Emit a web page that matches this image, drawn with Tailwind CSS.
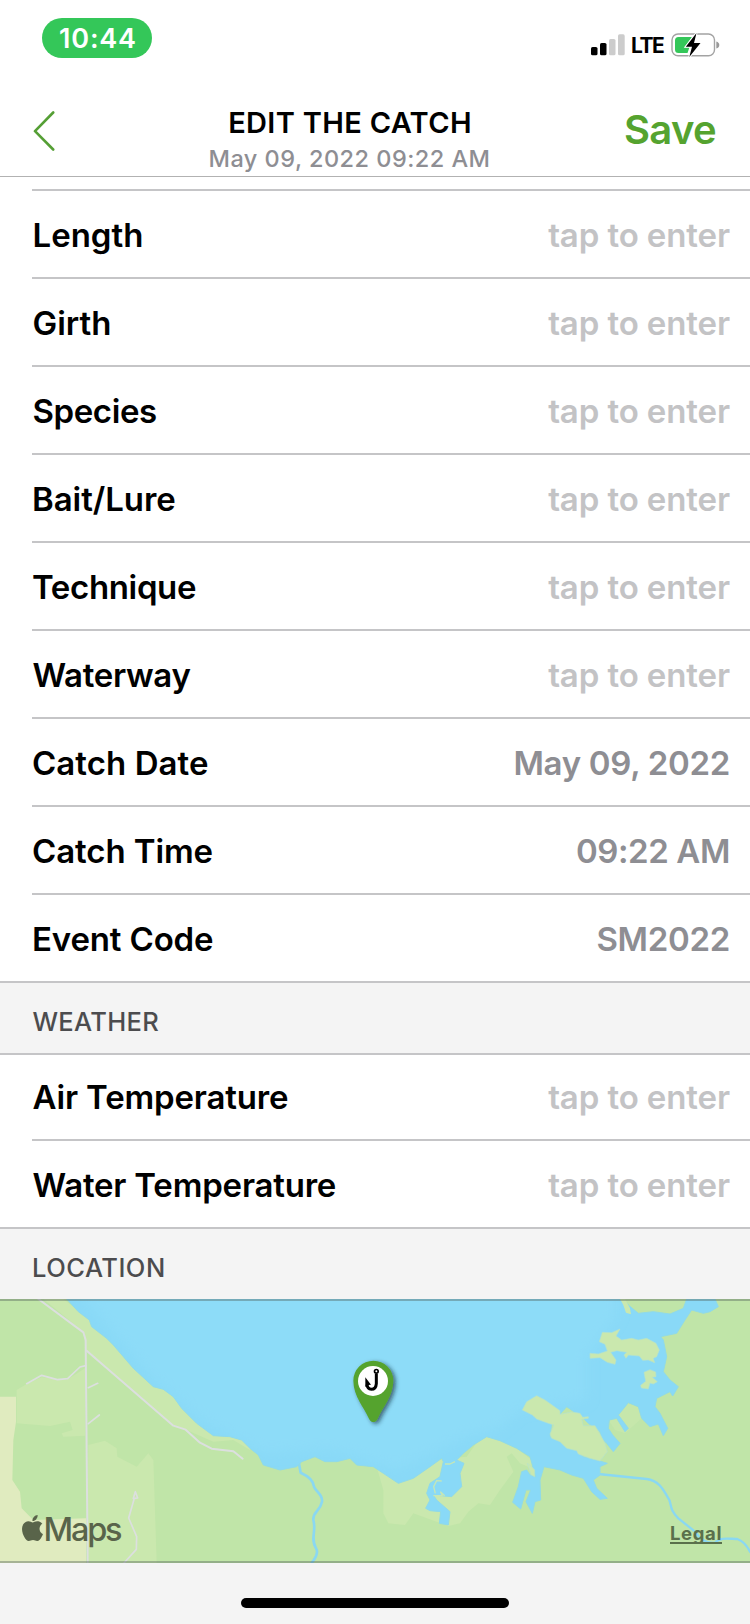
<!DOCTYPE html>
<html lang="en">
<head>
<meta charset="utf-8">
<title>Edit the Catch</title>
<script src="https://cdn.jsdelivr.net/npm/@tailwindcss/browser@4"></script>
</head>
<body class="flex h-[1624px] w-[750px] flex-col overflow-hidden bg-[#f4f4f4] font-['Inter','Liberation_Sans',sans-serif] whitespace-nowrap text-black">

<header class="h-[177px] shrink-0 border-b border-[#b2b2b2] bg-white">
  <div class="flex h-[76px] items-start justify-between pt-[18px] pr-[30px] pl-[42px]">
    <div class="flex h-10 w-[110px] items-center justify-center rounded-full bg-[#34c759] pt-[2px] pl-[2px] text-[27px] font-semibold tracking-[0.8px] text-white">10:44</div>
    <div class="flex h-6 items-center mt-[15px]">
      <svg class="h-6 w-[36px]" viewBox="590 33 36 24">
        <rect x="591" y="47" width="6.5" height="8.3" rx="1.6"/>
        <rect x="600" y="43" width="6.5" height="12.3" rx="1.6"/>
        <rect x="609" y="39" width="6.5" height="16.3" rx="1.6" fill="#ccc"/>
        <rect x="618" y="34.3" width="6.7" height="21" rx="1.6" fill="#ccc"/>
      </svg>
      <span class="ml-[5px] w-[32px] pt-[2px] text-[21px] leading-6 font-bold tracking-[-1.5px]">LTE</span>
      <svg class="ml-[7px] h-6 w-[50px]" viewBox="670 33 50 24">
        <rect x="672" y="34" width="42.5" height="21.7" rx="6" fill="#fff" stroke="#a3a3a3" stroke-width="1.4"/>
        <path d="M678.5 37H692L684.5 47.3h5L687.5 53H678.5q-3.5 0-3.5-3.500V40.500q0-3.500 3.500-3.500z" fill="#34c759"/>
        <path d="M716.300 41.500q3 1 3 3.500t-3 3.500z" fill="#999"/>
        <path d="M696.500 33 685.800 46.700h6.200L689.300 57 700.500 43h-6.500z" stroke="#fff" stroke-width="2" paint-order="stroke"/>
      </svg>
    </div>
  </div>
  <div class="grid h-[100px] grid-cols-[150px_400px_166px] pt-[29px]">
    <svg class="mt-[4px] ml-[32px] h-[42px] w-6" viewBox="0 0 24 42" fill="none" stroke="#559f35" stroke-width="2.600" stroke-linecap="round" stroke-linejoin="round"><path d="M21.200 3.500 3 22.200 21.200 40.500"/></svg>
    <div class="flex flex-col items-center">
      <h1 class="h-9 text-[29px] leading-9 font-semibold tracking-[0.330px]">EDIT THE CATCH</h1>
      <p class="pr-[1px] text-[23.5px] leading-9 font-medium tracking-[0.480px] text-[#8e8e93]">May 09, 2022 09:22 AM</p>
    </div>
    <div class="pt-[2px] text-right text-[40px] leading-[46px] font-semibold tracking-[-0.650px] text-[#55a32f]">Save</div>
  </div>
</header>

<main class="bg-white text-[33px] font-semibold">
  <div class="ml-8 h-[14px] border-b-2 border-[#c5c5c7]"></div>
  <div class="ml-8 flex h-[88px] items-center justify-between border-b-2 border-[#c5c5c7] pt-1 pr-5 pl-[0.500px]"><span>Length</span><span class="text-[#c3c3c5] tracking-[-0.100px]">tap to enter</span></div>
  <div class="ml-8 flex h-[88px] items-center justify-between border-b-2 border-[#c5c5c7] pt-1 pr-5 pl-[0.500px]"><span>Girth</span><span class="text-[#c3c3c5] tracking-[-0.100px]">tap to enter</span></div>
  <div class="ml-8 flex h-[88px] items-center justify-between border-b-2 border-[#c5c5c7] pt-1 pr-5 pl-[0.500px]"><span class="tracking-[-0.400px]">Species</span><span class="text-[#c3c3c5] tracking-[-0.100px]">tap to enter</span></div>
  <div class="ml-8 flex h-[88px] items-center justify-between border-b-2 border-[#c5c5c7] pt-1 pr-5"><span class="tracking-[-0.050px]">Bait/Lure</span><span class="text-[#c3c3c5] tracking-[-0.100px]">tap to enter</span></div>
  <div class="ml-8 flex h-[88px] items-center justify-between border-b-2 border-[#c5c5c7] pt-1 pr-5"><span class="tracking-[-0.350px]">Technique</span><span class="text-[#c3c3c5] tracking-[-0.100px]">tap to enter</span></div>
  <div class="ml-8 flex h-[88px] items-center justify-between border-b-2 border-[#c5c5c7] pt-1 pr-5 pl-[0.500px]"><span class="tracking-[-0.300px]">Waterway</span><span class="text-[#c3c3c5] tracking-[-0.100px]">tap to enter</span></div>
  <div class="ml-8 flex h-[88px] items-center justify-between border-b-2 border-[#c5c5c7] pt-1 pr-5"><span class="tracking-[0.050px]">Catch Date</span><span class="text-[#8e8e93] tracking-[-0.300px]">May 09, 2022</span></div>
  <div class="ml-8 flex h-[88px] items-center justify-between border-b-2 border-[#c5c5c7] pt-1 pr-5"><span class="tracking-[-0.100px]">Catch Time</span><span class="text-[#8e8e93] tracking-[-0.400px]">09:22 AM</span></div>
  <div class="flex h-[88px] items-center justify-between border-b-2 border-[#c5c5c7] pt-1 pr-5 pl-8"><span class="tracking-[-0.150px]">Event Code</span><span class="text-[#8e8e93] tracking-[-0.300px]">SM2022</span></div>

  <h2 class="flex h-[72px] items-center border-b-2 border-[#c5c5c7] bg-[#f4f4f4] pt-2 pl-[32.500px] text-[25.500px] font-medium tracking-[0.300px] text-[#4c4c4e]">WEATHER</h2>
  <div class="ml-8 flex h-[86px] items-center justify-between border-b-2 border-[#c5c5c7] pt-[2px] pr-5 pl-[0.500px]"><span class="tracking-[-0.150px]">Air Temperature</span><span class="text-[#c3c3c5] tracking-[-0.100px]">tap to enter</span></div>
  <div class="flex h-[88px] items-center justify-between border-b-2 border-[#c5c5c7] pt-1 pr-5 pl-[32.500px]"><span class="tracking-[-0.200px]">Water Temperature</span><span class="text-[#c3c3c5] tracking-[-0.100px]">tap to enter</span></div>
  <h2 class="flex h-[70px] items-center bg-[#f4f4f4] pt-2 pl-[32px] text-[25.500px] font-medium tracking-[0.500px] text-[#4c4c4e]">LOCATION</h2>
</main>

<section class="relative h-[264px] shrink-0">
  <svg class="block h-[264px] w-[750px]" viewBox="0 27 2250 792" preserveAspectRatio="none">
    <defs>
      <filter id="soft" x="-20%" y="-20%" width="140%" height="140%"><feGaussianBlur stdDeviation="18"/></filter>
      <filter id="shade" x="-40%" y="-40%" width="200%" height="200%"><feDropShadow dx="7" dy="5" stdDeviation="7" flood-color="#123" flood-opacity=".65"/></filter>
      <path id="water" d="M200 27 235 65 268 90 275 110 320 145 340 165 400 235 460 290 490 298 520 320 545 355 590 400 640 437 690 440 725 450 750 475 775 495 790 525 840 540 890 530 905 515 945 500 975 515 1010 515 1050 505 1070 525 1120 530 1150 550 1195 580 1240 565 1290 530 1325 505 1330 515 1320 560 1290 580 1280 610 1290 630 1277 655 1290 662 1322 665 1318 700 1345 705 1350 665 1310 630 1300 615 1355 620 1385 590 1380 550 1392 520 1370 510 1390 490 1420 465 1460 440 1500 452 1550 475 1590 500 1600 535 1607 560 1590 555 1580 540 1565 545 1555 590 1538 637 1562 657 1578 600 1592 600 1578 635 1597 670 1605 635 1622 630 1620 570 1632 530 1680 540 1715 555 1750 565 1775 605 1800 628 1822 625 1790 595 1780 570 1800 555 1800 530 1822 520 1790 510 1750 500 1730 480 1650 440 1655 400 1700 350 1750 385 1765 400 1800 425 1805 445 1820 460 1840 485 1860 460 1838 435 1825 415 1828 390 1850 385 1875 425 1885 415 1855 375 1885 338 1915 350 1925 385 1950 410 1975 402 1990 437 2003 415 1980 370 1965 350 1970 325 2010 305 2018 318 2035 290 2010 270 1990 245 2000 200 1990 150 1982 140 2030 130 2055 90 2075 60 2110 70 2130 65 2155 50 2145 27 2060 27 2050 55 2010 72 1960 65 1915 70 1885 45 1870 27Z"/>
      <clipPath id="lake"><use href="#water"/></clipPath>
    </defs>
    <rect y="27" width="2250" height="792" fill="#c0e5a8"/>
    <g fill="#cae8ae">
      <path d="M190 27 750 455V480L700 450 640 455 560 420 520 408 260 185 250 125 130 27Z"/>
      <path d="M50 300 80 282 125 262 200 270 255 235V437L190 440 185 430 218 420 210 395 150 408 50 400Z"/>
      <path d="M265 465 315 452 350 475 352 500 410 530 445 490 460 510 470 819H260Z"/>
      <path d="M1130 530 1400 500 1450 430 1500 445 1550 475 1595 510V535L1560 520 1535 490 1520 500 1540 545 1500 600 1470 645 1435 640 1405 665 1380 700 1345 708 1240 670 1215 705 1165 700 1150 670 1150 600Z"/>
      <path d="M1825 390 1880 335 1920 355 1925 385 1875 430 1845 420Z" opacity=".6"/>
    </g>
    <path d="M0 320H48V395L40 450 37 570 60 605 65 655 100 690 258 685V819H0Z" fill="#e0ebbf"/>
    <g fill="none" stroke="#dcdfdf" stroke-width="5" stroke-linejoin="round" stroke-linecap="round">
      <path d="M115 27 250 127 257 150 263 819" stroke-width="6"/>
      <path d="M260 182 520 407 557 419 600 458 635 476 700 484 728 506" stroke-width="6"/>
      <path d="M80 281 125 256 172 269 203 266 240 231 257 227M265 293 293 280M265 401 298 375M372 819 409 778 410 740 386 684 403 625 413 624 406 605 400 625"/>
    </g>
    <g fill="none" stroke="#8ad8f2" stroke-linecap="round" stroke-linejoin="round">
      <path d="M895 510 902 548Q940 565 942 590C948 605 970 615 966 635 960 665 938 665 940 690 950 725 930 745 948 775Q958 790 935 819" stroke-width="8"/>
      <path d="M1795 552Q1870 560 1940 567C1980 573 1990 600 2008 630 2015 650 2010 660 2035 685L2085 725Q2110 763 2145 758C2160 740 2190 747 2212 747Q2235 755 2250 785" stroke-width="7"/>
    </g>
    <use href="#water" fill="#89d9f7" stroke="#90dae8" stroke-width="3" stroke-linejoin="round"/>
    <g clip-path="url(#lake)">
      <path d="M230 0 450 260 600 390 790 490 1000 480 1190 540 1400 440 1490 420 1560 360 1760 330 1760 200 1850 80 1850 0Z" fill="#8ddcf8" filter="url(#soft)"/>
    </g>
    <g fill="#cae8ae" stroke="#b5e2cb" stroke-width="2" stroke-linejoin="round">
      <path d="M1567 360 1580 335 1610 317 1635 330 1680 362 1680 373 1715 366 1740 370 1748 382 1765 380 1765 385 1745 388 1750 407 1785 407 1800 432 1815 460 1822 485 1800 513 1770 505 1735 492 1730 482 1700 475 1680 455 1655 445 1650 432 1662 405 1645 400 1610 387 1597 375Z"/>
      <path d="M1770 205V190L1795 192 1822 183 1815 163 1798 155 1807 127 1835 128 1860 117 1848 138 1865 150 1895 145 1915 150 1940 145 1968 160 1978 180 1970 200 1960 205 1964 218 1945 210 1928 211 1918 198 1885 195 1878 205 1872 195 1880 187 1850 182 1832 187 1848 210 1845 223 1822 217 1800 203Z"/>
      <path d="M1932 247 1950 239 1967 246 1968 260 1957 262 1972 275 1960 282 1950 279 1945 297 1924 294 1922 286 1937 274Z"/>
      <path d="M1860 27 1870 45 1878 68 1893 73 1890 55 1875 27Z" stroke="none"/>
      <path d="M1582 520 1595 530 1604 540V560L1593 554Z"/>
      <path d="M1306 610 1301 590 1310 572 1325 573" fill="none" stroke-width="4" stroke="#c5e7b7"/>
      <path d="M1300 617H1327L1322 606 1334 617M1335 522H1350L1365 515" fill="none" stroke-width="4" stroke="#c5e7b7"/>
    </g>
    <g filter="url(#shade)">
      <path d="M1120 396Q1112 396 1107 386C1092 351 1060 318 1060 272A60 60 0 0 1 1180 272C1180 318 1148 351 1133 386Q1128 396 1120 396Z" fill="#55a32f"/>
    </g>
    <circle cx="1119" cy="273" r="45" fill="#fff"/>
    <g fill="none" stroke="#000">
      <circle cx="1129" cy="244" r="5.500" stroke-width="5"/>
      <path d="M1129 251V281Q1128 298 1114 298 1102 297 1101 284" stroke-width="9"/>
      <path d="M1096 262 1113 284 1106 285 1103 290H1096Z" fill="#000" stroke="none"/>
    </g>
    <path d="M0 30H2250M0 816H2250" stroke="#506058" stroke-opacity=".4" stroke-width="6"/>
  </svg>
  <div class="absolute top-[213px] left-[21.500px] flex items-center text-[#59644a]">
    <svg class="-mt-[5px] h-[26px] w-[21px]" viewBox="2.200 0 19.600 24" preserveAspectRatio="none" fill="currentColor"><path d="M12.152 6.896c-.948 0-2.415-1.078-3.960-1.040-2.040.027-3.910 1.183-4.961 3.014-2.117 3.675-.546 9.103 1.519 12.090 1.013 1.454 2.208 3.090 3.792 3.039 1.520-.065 2.090-.987 3.935-.987 1.831 0 2.350.987 3.960.948 1.637-.026 2.676-1.480 3.676-2.948 1.156-1.688 1.636-3.325 1.662-3.415-.039-.013-3.182-1.221-3.220-4.857-.026-3.040 2.480-4.494 2.597-4.559-1.429-2.090-3.623-2.324-4.390-2.376-2-.156-3.675 1.090-4.610 1.090zM15.530 3.830c.843-1.012 1.400-2.427 1.245-3.830-1.207.052-2.662.805-3.532 1.818-.780.896-1.454 2.338-1.273 3.714 1.338.104 2.715-.688 3.559-1.701"/></svg>
    <span class="ml-[1px] text-[32.500px] leading-[36px] font-medium tracking-[-2.200px]">Maps</span>
  </div>
  <a class="absolute top-[225px] left-[670px] border-b-2 border-[#5a704c] text-[18.500px] leading-[18px] font-bold tracking-[0.650px] text-[#5a704c]">Legal</a>
</section>

<footer class="flex grow items-start justify-center pt-[35px]"><div class="h-[10px] w-[268px] rounded-full bg-black"></div></footer>
</body>
</html>
